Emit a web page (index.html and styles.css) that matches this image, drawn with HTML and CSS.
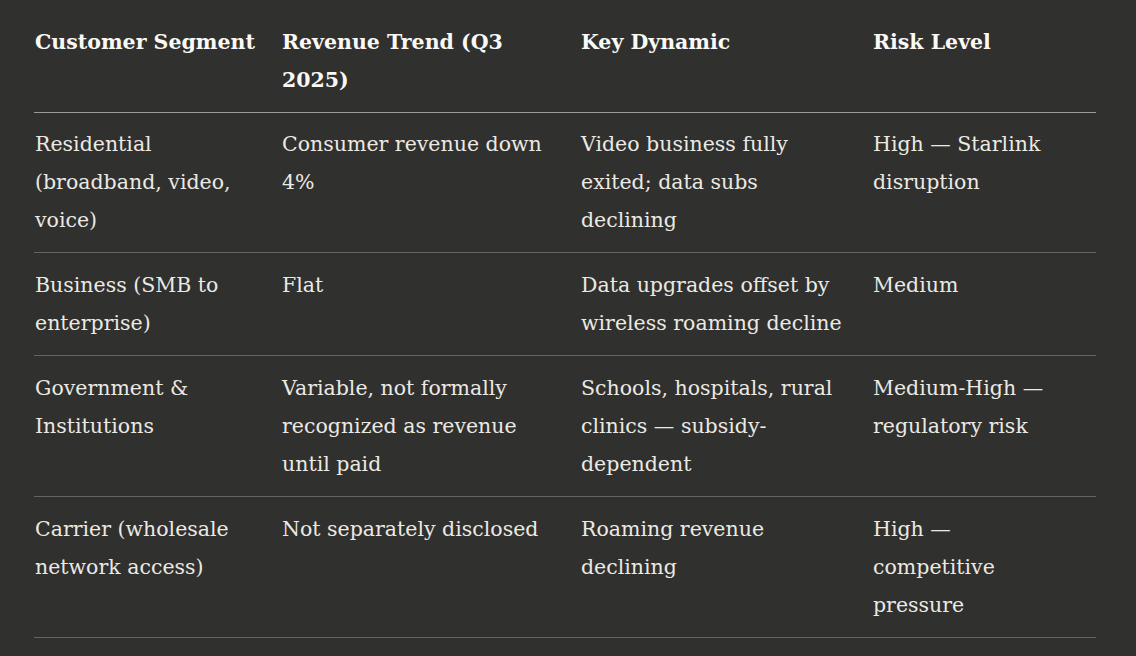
FILE: index.html
```html
<!DOCTYPE html>
<html lang="en">
<head>
<meta charset="utf-8">
<title>Customer Segments</title>
<link rel="stylesheet" href="styles.css">
</head>
<body>
<main class="page">
  <table class="seg-table">
    <colgroup>
      <col class="c1">
      <col class="c2">
      <col class="c3">
      <col class="c4">
    </colgroup>
    <thead>
      <tr>
        <th>Customer Segment</th>
        <th>Revenue Trend (Q3 2025)</th>
        <th>Key Dynamic</th>
        <th>Risk Level</th>
      </tr>
    </thead>
    <tbody>
      <tr>
        <td>Residential (broadband, video, voice)</td>
        <td>Consumer revenue down 4%</td>
        <td>Video business fully exited; data subs declining</td>
        <td>High — Starlink disruption</td>
      </tr>
      <tr>
        <td>Business (SMB to enterprise)</td>
        <td>Flat</td>
        <td>Data upgrades offset by wireless roaming decline</td>
        <td>Medium</td>
      </tr>
      <tr>
        <td>Government &amp; Institutions</td>
        <td>Variable, not formally recognized as revenue until paid</td>
        <td>Schools, hospitals, rural clinics — subsidy-dependent</td>
        <td>Medium-High — regulatory risk</td>
      </tr>
      <tr>
        <td>Carrier (wholesale network access)</td>
        <td>Not separately disclosed</td>
        <td>Roaming revenue declining</td>
        <td>High — competitive pressure</td>
      </tr>
    </tbody>
  </table>
</main>
</body>
</html>
```

FILE: styles.css
```css
html, body {
  margin: 0;
  padding: 0;
  background: #30302e;
}

body {
  font-family: "DejaVu Serif", "Liberation Serif", serif;
  font-size: 20.5px;
  line-height: 38px;
  color: #ebe9e3;
}

.page {
  padding: 9px 40px 0 34px;
}

.seg-table {
  width: 1062px;
  table-layout: fixed;
  border-collapse: collapse;
}

.c1 { width: 240px; }
.c2 { width: 299px; }
.c3 { width: 292px; }
.c4 { width: 231px; }

.seg-table th,
.seg-table td {
  text-align: left;
  vertical-align: top;
  padding: 14px 8px 13px 8px;
}

.seg-table td {
  padding-top: 12px;
  padding-bottom: 13px;
}

.seg-table th:first-child,
.seg-table td:first-child {
  padding-left: 1px;
}

.seg-table th:last-child,
.seg-table td:last-child {
  padding-right: 33px;
}

.seg-table th {
  font-weight: 700;
  color: #faf9f5;
  border-bottom: 1px solid #9b9a96;
}

.seg-table td {
  font-weight: 400;
  border-bottom: 1px solid #646461;
}

.seg-table tbody tr + tr td {
  padding-top: 13px;
}
```
